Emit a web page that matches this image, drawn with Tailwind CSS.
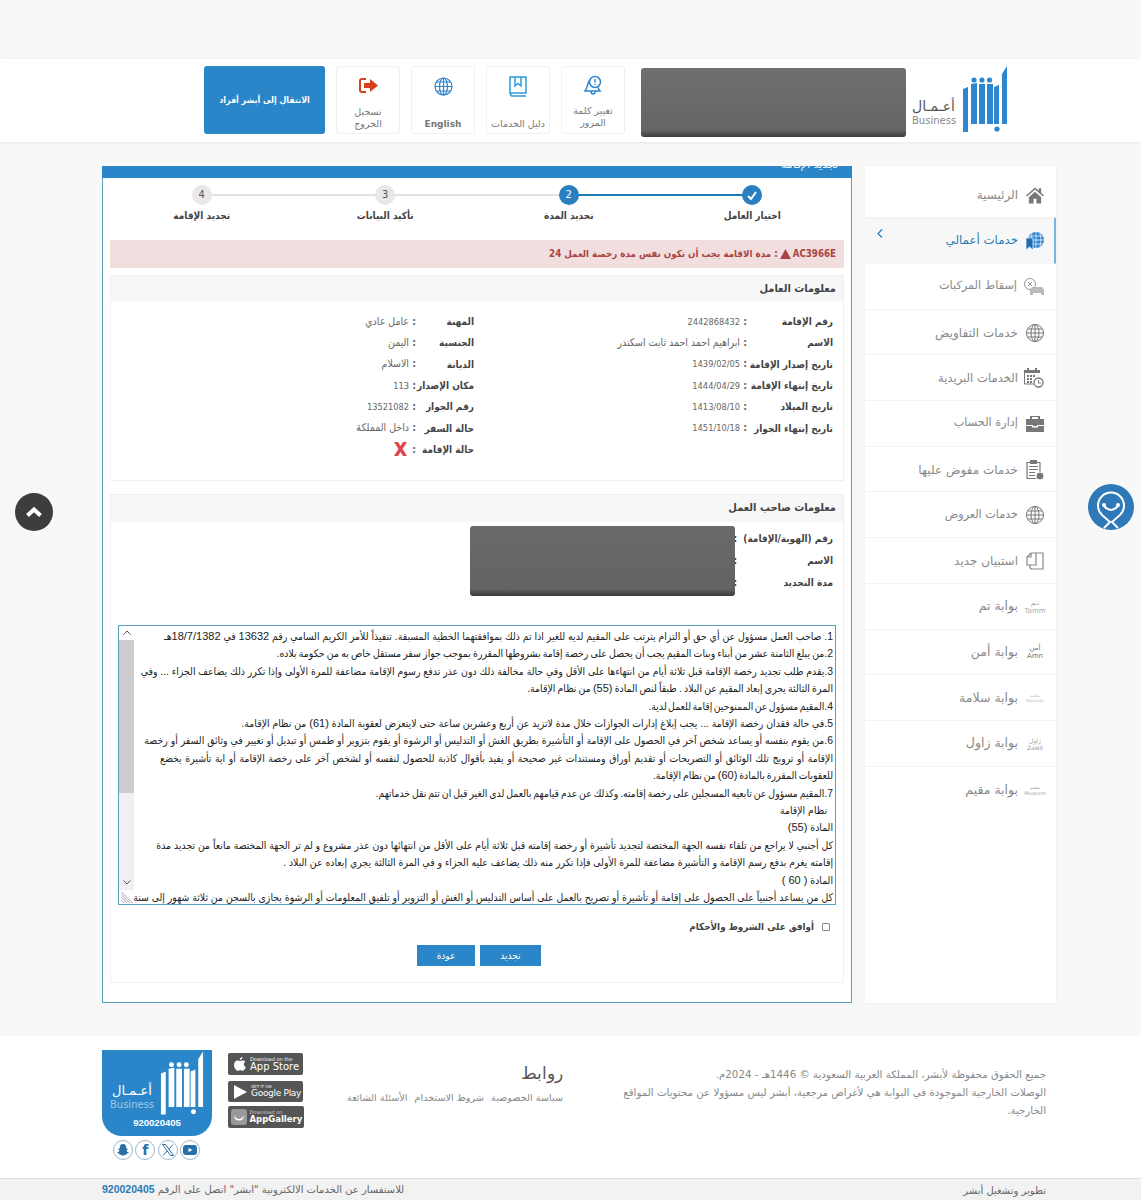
<!DOCTYPE html>
<html lang="ar" dir="rtl">
<head>
<meta charset="UTF-8">
<meta name="viewport" content="width=device-width, initial-scale=1.0">
<title>أبشر أعمال</title>
<script src="https://cdn.jsdelivr.net/npm/@tailwindcss/browser@4"></script>
</head>
<body class="relative h-[1200px] overflow-hidden bg-[#f8f8f8] font-['DejaVu_Sans',sans-serif] text-[#666]">

<!-- top bar -->
<header class="mt-[59px] flex h-[83px] items-start bg-white pr-[133px] shadow-[0_1px_3px_rgba(0,0,0,0.08)]">
  <div class="mt-[7px] flex h-[66px] w-[96px] items-end justify-between">
    <svg class="h-[66px] w-[46px] fill-[#2e86d0]" viewBox="0 0 46 66">
      <path d="M1 23l5-2v45H1zM9 18l6-1v41H9zM17 18h6v40h-6zM25 18h6v40h-6zM32 21l5-2v39h-5zM40 58V8l5-8v58z"/>
      <circle cx="12" cy="14" r="2.600"/><circle cx="20" cy="14" r="2.600"/><circle cx="27.500" cy="14" r="2.600"/><circle cx="35" cy="63" r="2.600"/>
    </svg>
    <div class="mb-[6px] flex flex-col items-end leading-none">
      <span class="text-[14px] text-[#555]">أعـمـال</span>
      <span dir="ltr" class="mt-[3px] text-[10px] text-[#888]">Business</span>
    </div>
  </div>
  <div class="mr-[6px] mt-[9px] h-[69px] w-[265px] rounded-[3px] bg-linear-to-b from-[#6e6f6f] via-[#646565] via-[90%] to-[#3d3d3d]"></div>
  <div class="mr-[16px] mt-[7px] flex gap-[11px]">
    <a class="flex h-[68px] w-[64px] flex-col items-center rounded-[3px] border border-[#f0f0f0] pt-[8px] text-center text-[9.500px] leading-[12px] text-[#777]">
      <svg class="h-[22px] w-[22px] fill-none stroke-[#2e86d0] stroke-[1.500]" viewBox="0 0 22 22"><circle cx="13" cy="7" r="5.500"/><path d="M13 4v3.500M13 9v1M7 6c-1.500 2-1 6-4 10h15c-1-1-1.500-2-2-3.500M9 16c0 4 4 4 4.500 0"/></svg>
      <span class="mt-[8px]">تغيير كلمة المرور</span>
    </a>
    <a class="flex h-[68px] w-[64px] flex-col items-center rounded-[3px] border border-[#f0f0f0] pt-[9px] text-center text-[9.500px] leading-[12px] text-[#777]">
      <svg class="h-[21px] w-[20px] fill-none stroke-[#2e9bd6] stroke-[1.500]" viewBox="0 0 20 21"><path d="M2 18V1h16v16H4c-2 0-2 3 0 3h14M7 1v9l3-2.500L13 10V1"/></svg>
      <span class="mt-[21px] whitespace-nowrap">دليل الخدمات</span>
    </a>
    <a class="flex h-[68px] w-[64px] flex-col items-center rounded-[3px] border border-[#f0f0f0] pt-[10px] text-center text-[9px] font-bold leading-[12px] text-[#777]">
      <svg class="h-[19px] w-[19px] fill-none stroke-[#2e86d0] stroke-[1.200]" viewBox="0 0 19 19"><circle cx="9.500" cy="9.500" r="8.500"/><ellipse cx="9.500" cy="9.500" rx="4" ry="8.500"/><path d="M9.500 1v17M1 9.500h17M2 5h15M2 14h15"/></svg>
      <span class="mt-[22px]">English</span>
    </a>
    <a class="flex h-[68px] w-[64px] flex-col items-center rounded-[3px] border border-[#f0f0f0] pt-[11px] text-center text-[9.500px] leading-[12px] text-[#777]">
      <svg class="h-[15px] w-[19px]" viewBox="0 0 19 15"><path class="fill-none stroke-[#d6401a] stroke-2" d="M7 1H3Q1 1 1 3v9q0 2 2 2h4"/><path class="fill-[#d6401a]" d="M5 5h6V1l8 6.500-8 6.500v-4H5z"/></svg>
      <span class="mt-[13px] w-[40px]">تسجيل الخروج</span>
    </a>
    <a class="flex h-[68px] w-[121px] items-center justify-center rounded-[3px] bg-[#2a86c8] pt-[1px] font-['DejaVu_Sans_Condensed',sans-serif] text-[8.800px] font-bold text-white">الانتقال إلى أبشر أفراد</a>
  </div>
</header>

<main class="mt-[24px] flex h-[837px] gap-[13px] pl-[102px] pr-[85px]">
  <!-- side menu -->
  <nav class="h-full w-[191px] bg-white text-[12px] text-[#888] shadow-[0_0_2px_rgba(0,0,0,0.06)]">
    <a class="flex h-[52px] items-center border-b border-[#f3f3f3] pr-[12px] pt-[6px]">
      <svg class="h-[18px] w-[18px] fill-[#777]" viewBox="0 0 19 18"><path d="M9.500 1L0 9.500l1 1.200L9.500 3.200 18 10.700l1-1.200-3-2.700V2h-2.500v2.500zM3 11.500V18h5v-5h3v5h5v-6.500L9.500 5.500z"/></svg>
      <span class="mr-[8px]">الرئيسية</span>
    </a>
    <a class="relative flex h-[46px] items-center border-b border-r-2 border-b-[#f3f3f3] border-r-[#7ab5e0] bg-[#f7f7f7] pr-[10px] pt-[1px] text-[#2a7cb5]">
      <svg class="h-[18px] w-[18px]" viewBox="0 0 18 18"><circle class="fill-[#2e86d0]" cx="10" cy="8" r="8"/><path class="fill-none stroke-white stroke-[0.700]" d="M2 8h16M10 0v16M6 1q-2 7 0 14M14 1q2 7 0 14M3 4h14M3 12h14"/><path class="fill-[#1f6fb0] stroke-white stroke-[0.700]" d="M0 6h7v12l-3.500-3L0 18z"/></svg>
      <span class="mr-[8px] text-[11.800px] font-medium">خدمات أعمالي</span>
      <svg class="absolute left-[12px] top-[11px] h-[9px] w-[6px] fill-none stroke-[#2a7cb5] stroke-[1.200]" viewBox="0 0 6 9"><path d="M5 .5L1 4.500 5 8.500"/></svg>
    </a>
    <a class="flex h-[45.700px] items-center border-b border-[#f3f3f3] pr-[11px] pt-[1px]">
      <svg class="h-[18px] w-[22px] fill-none stroke-[#999]" viewBox="0 0 22 18"><circle cx="7" cy="6" r="5.500"/><path d="M5 4l4 4M9 4L5 8"/><path class="fill-[#bbb] stroke-none" d="M9 9h10l2 3v5h-3v-2H10v2H7v-5z"/></svg>
      <span class="mr-[6px] text-[11.300px]">إسقاط المركبات</span>
    </a>
    <a class="flex h-[45.700px] items-center border-b border-[#f3f3f3] pr-[12px] pt-[1px]">
      <svg class="h-[18px] w-[18px] fill-none stroke-[#777]" viewBox="0 0 18 18"><circle cx="9" cy="9" r="8.500"/><ellipse cx="9" cy="9" rx="4" ry="8.500"/><path d="M9 .5v17M.5 9h17M2 5h14M2 13h14"/></svg>
      <span class="mr-[8px]">خدمات التفاويض</span>
    </a>
    <a class="flex h-[45.700px] items-center border-b border-[#f3f3f3] pr-[12px] pt-[1px]">
      <svg class="h-[20px] w-[20px]" viewBox="0 0 20 20"><path class="fill-[#777]" d="M0 2h16v3H0zM3 0h2v3H3zM11 0h2v3h-2z"/><path class="fill-none stroke-[#777]" d="M.5 5v11h9"/><path class="fill-[#777]" d="M3 7h2v2H3zM6 7h2v2H6zM9 7h2v2H9zM3 10h2v2H3zM6 10h2v2H6zM3 13h2v2H3zM6 13h2v2H6z"/><circle class="fill-white stroke-[#777] stroke-[1.300]" cx="14.500" cy="14.500" r="4.500"/><path class="fill-none stroke-[#777]" d="M14.500 12v3h2.500"/></svg>
      <span class="mr-[6px] text-[11.600px]">الخدمات البريدية</span>
    </a>
    <a class="flex h-[45.700px] items-center border-b border-[#f3f3f3] pr-[12px] pt-[1px]">
      <svg class="h-[16px] w-[18px] fill-[#777]" viewBox="0 0 18 16"><path d="M6 3V1h6v2h2V0H4v3zM0 3h18v6h-7v1H7V9H0zM0 10h6v1.500h6V10h6v6H0z"/></svg>
      <span class="mr-[8px] text-[11.300px]">إدارة الحساب</span>
    </a>
    <a class="flex h-[45.700px] items-center border-b border-[#f3f3f3] pr-[12px] pt-[1px]">
      <svg class="h-[20px] w-[18px]" viewBox="0 0 18 20"><path class="fill-none stroke-[#777] stroke-[1.200]" d="M1 2.500h13v16H1z"/><path class="fill-[#777]" d="M4 0h7v4H4zM3 6h9v1H3zM3 9h9v1H3zM3 12h6v1H3zM3 15h6v1H3z"/><circle class="fill-[#777] stroke-white" cx="14" cy="16" r="4"/></svg>
      <span class="mr-[8px]">خدمات مفوض عليها</span>
    </a>
    <a class="flex h-[45.700px] items-center border-b border-[#f3f3f3] pr-[12px] pt-[1px]">
      <svg class="h-[18px] w-[18px] fill-none stroke-[#777]" viewBox="0 0 18 18"><circle cx="9" cy="9" r="8.500"/><ellipse cx="9" cy="9" rx="4" ry="8.500"/><path d="M9 .5v17M.5 9h17M2 5h14M2 13h14"/></svg>
      <span class="mr-[8px] text-[11.200px]">خدمات العروض</span>
    </a>
    <a class="flex h-[45.700px] items-center border-b border-[#f3f3f3] pr-[12px] pt-[1px]">
      <svg class="h-[18px] w-[18px] fill-none stroke-[#888] stroke-[1.200]" viewBox="0 0 18 18"><path d="M6 1h11v16H6q-2 0-2-2v-2M1 13V5l4-4h5v12H1zM1 5h4V1"/></svg>
      <span class="mr-[8px]">استبيان جديد</span>
    </a>
    <a class="flex h-[45.700px] items-center border-b border-[#f3f3f3] pr-[11px] pt-[1px]">
      <span class="flex w-[20px] flex-col items-center text-[7px] leading-[8px] text-[#aaa]"><span>تـم</span><span dir="ltr">Tamm</span></span>
      <span class="mr-[7px] text-[12.500px]">بوابة تم</span>
    </a>
    <a class="flex h-[45.700px] items-center border-b border-[#f3f3f3] pr-[11px] pt-[1px]">
      <span class="flex w-[20px] flex-col items-center text-[7px] leading-[8px] text-[#777]"><span>أمن</span><span dir="ltr">Amn</span></span>
      <span class="mr-[7px] text-[12.500px]">بوابة أمن</span>
    </a>
    <a class="flex h-[45.700px] items-center border-b border-[#f3f3f3] pr-[11px] pt-[1px]">
      <span class="flex w-[20px] flex-col items-center text-[4px] leading-[5px] text-[#bbb]"><span>سلامة</span><span dir="ltr">Salamah</span></span>
      <span class="mr-[7px] text-[12.500px]">بوابة سلامة</span>
    </a>
    <a class="flex h-[45.700px] items-center border-b border-[#f3f3f3] pr-[11px] pt-[1px]">
      <span class="flex w-[20px] flex-col items-center text-[6px] leading-[7px] text-[#999]"><span>زاول</span><span dir="ltr">Zawil</span></span>
      <span class="mr-[7px] text-[12.500px]">بوابة زاول</span>
    </a>
    <a class="flex h-[45.700px] items-center pr-[11px] pt-[1px]">
      <span class="flex w-[20px] flex-col items-center text-[5px] leading-[6px] text-[#aaa]"><span>مقيم</span><span dir="ltr">Muqeem</span></span>
      <span class="mr-[7px] text-[12.500px]">بوابة مقيم</span>
    </a>
  </nav>

  <!-- wizard panel -->
  <section class="h-full w-[750px] border border-t-0 border-[#5a9fc0] bg-white font-['DejaVu_Sans_Condensed',sans-serif]">
    <div class="-mx-px h-[12px] overflow-hidden bg-[#2a86c8] pr-[14px] text-[12px] text-white"><div class="-mt-[5px] leading-[6px]">تجديد الإقامة</div></div>

    <!-- steps -->
    <div class="mx-[7px] grid grid-cols-4 pt-[7px] text-[10px] font-bold text-[#444]">
      <div class="relative flex flex-col items-center">
        <span class="absolute right-1/2 top-[9px] h-[2px] w-full bg-[#1f7ab8]"></span>
        <span class="relative flex h-[20px] w-[20px] items-center justify-center rounded-full bg-[#2a7fc0]"><svg class="h-[9px] w-[10px] fill-none stroke-white stroke-2" viewBox="0 0 10 9"><path d="M1 5l3 3 5-7"/></svg></span>
        <span class="mt-[3px]">اختيار العامل</span>
      </div>
      <div class="relative flex flex-col items-center">
        <span class="absolute right-1/2 top-[9px] h-[2px] w-full bg-[#e2e2e2]"></span>
        <span class="relative flex h-[20px] w-[20px] items-center justify-center rounded-full bg-[#2a7fc0] text-[11px] font-normal text-white">2</span>
        <span class="mt-[3px]">تحديد المدة</span>
      </div>
      <div class="relative flex flex-col items-center">
        <span class="absolute right-1/2 top-[9px] h-[2px] w-full bg-[#e2e2e2]"></span>
        <span class="relative flex h-[20px] w-[20px] items-center justify-center rounded-full bg-[#e8e8e8] text-[11px] font-normal text-[#555]">3</span>
        <span class="mt-[3px]">تأكيد البيانات</span>
      </div>
      <div class="relative flex flex-col items-center">
        <span class="relative flex h-[20px] w-[20px] items-center justify-center rounded-full bg-[#e8e8e8] text-[11px] font-normal text-[#555]">4</span>
        <span class="mt-[3px]">تجديد الإقامة</span>
      </div>
    </div>

    <div class="mx-[7px] mt-[17px] flex h-[28px] items-center gap-[2px] bg-[#f2dede] pr-[8px] text-[9.700px] font-bold text-[#a94442]">
      <span dir="ltr">AC3966E</span>
      <svg class="h-[10px] w-[11px] fill-[#a94442]" viewBox="0 0 11 10"><path d="M5.500 0L11 10H0z"/></svg>
      <span>: مدة الاقامة يجب أن تكون نفس مدة رخصة العمل 24</span>
    </div>

    <!-- worker info -->
    <div class="mx-[7px] mt-[7px] h-[206px] border border-[#f0f0f0]">
      <h3 class="flex h-[26px] items-center bg-[#f7f7f7] pr-[7px] text-[11px] font-bold text-[#444]">معلومات العامل</h3>
      <div class="grid grid-cols-[359px_1fr] pr-[10px] pt-[9px] text-[10.500px] text-[#666]">
        <div>
          <div class="flex h-[21.300px] items-center"><b class="w-[86px] text-[10px] text-[#444]">رقم الإقامة</b><span class="w-[7px] font-bold">:</span><span class="text-[9.200px]">2442868432</span></div>
          <div class="flex h-[21.300px] items-center"><b class="w-[86px] text-[10px] text-[#444]">الاسم</b><span class="w-[7px] font-bold">:</span><span>ابراهيم احمد احمد ثابت اسكندر</span></div>
          <div class="flex h-[21.300px] items-center"><b class="w-[86px] text-[10px] text-[#444]">تاريخ إصدار الإقامة</b><span class="w-[7px] font-bold">:</span><span class="text-[9.200px]">1439/02/05</span></div>
          <div class="flex h-[21.300px] items-center"><b class="w-[86px] whitespace-nowrap text-[10px] text-[#444]">تاريخ إنتهاء الإقامة</b><span class="w-[7px] font-bold">:</span><span class="text-[9.200px]">1444/04/29</span></div>
          <div class="flex h-[21.300px] items-center"><b class="w-[86px] text-[10px] text-[#444]">تاريخ الميلاد</b><span class="w-[7px] font-bold">:</span><span class="text-[9.200px]">1413/08/10</span></div>
          <div class="flex h-[21.300px] items-center"><b class="w-[86px] text-[10px] text-[#444]">تاريخ إنتهاء الجواز</b><span class="w-[7px] font-bold">:</span><span class="text-[9.200px]">1451/10/18</span></div>
        </div>
        <div>
          <div class="flex h-[21.300px] items-center"><b class="w-[58px] text-[10px] text-[#444]">المهنة</b><span class="w-[7px] font-bold">:</span><span>عامل عادي</span></div>
          <div class="flex h-[21.300px] items-center"><b class="w-[58px] text-[10px] text-[#444]">الجنسية</b><span class="w-[7px] font-bold">:</span><span>اليمن</span></div>
          <div class="flex h-[21.300px] items-center"><b class="w-[58px] text-[10px] text-[#444]">الديانة</b><span class="w-[7px] font-bold">:</span><span>الاسلام</span></div>
          <div class="flex h-[21.300px] items-center"><b class="w-[58px] whitespace-nowrap text-[10px] text-[#444]">مكان الإصدار</b><span class="w-[7px] font-bold">:</span><span class="text-[9.200px]">113</span></div>
          <div class="flex h-[21.300px] items-center"><b class="w-[58px] text-[10px] text-[#444]">رقم الجواز</b><span class="w-[7px] font-bold">:</span><span class="text-[9.200px]">13521082</span></div>
          <div class="flex h-[21.300px] items-center"><b class="w-[58px] text-[10px] text-[#444]">حالة السفر</b><span class="w-[7px] font-bold">:</span><span>داخل المملكة</span></div>
          <div class="flex h-[21.300px] items-center"><b class="w-[58px] text-[10px] text-[#444]">حالة الإقامة</b><span class="w-[7px] font-bold">:</span>
            <svg class="mr-[2px] h-[14px] w-[13px] fill-[#e2444a]" viewBox="0 0 13 14"><path d="M0 0h4l2.500 4L9 0h4L8.500 7 13 14H9L6.500 10 4 14H0l4.500-7z"/></svg>
          </div>
        </div>
      </div>
    </div>

    <!-- employer info -->
    <div class="relative mx-[7px] mt-[13px] h-[489px] border border-[#f0f0f0]">
      <h3 class="flex h-[27px] items-center bg-[#f7f7f7] pr-[7px] text-[11px] font-bold text-[#444]">معلومات صاحب العمل</h3>
      <div class="pr-[10px] pt-[5px] text-[10px] font-bold text-[#444]">
        <div class="flex h-[22.300px] items-center"><span class="w-[96px] whitespace-nowrap">رقم (الهوية/الإقامة)</span><span>:</span></div>
        <div class="flex h-[22.300px] items-center"><span class="w-[96px]">الاسم</span><span>:</span></div>
        <div class="flex h-[22.300px] items-center"><span class="w-[96px]">مدة التجديد</span><span>:</span></div>
      </div>
      <div class="absolute right-[108px] top-[31px] h-[70px] w-[265px] rounded-[3px] bg-linear-to-b from-[#6a6a6a] via-[#636363] via-[90%] to-[#3a3a3a]"></div>

      <div class="mx-[7px] mt-[31px] flex h-[280px] overflow-hidden border border-[#5a9fc0] font-['Liberation_Sans','DejaVu_Sans_Condensed',sans-serif] text-[10.400px] leading-[17.400px] text-[#222]">
        <div class="min-w-0 flex-1 whitespace-nowrap pr-[2px] pt-[2px]">
          <div>1. صاحب العمل مسؤول عن أي حق أو التزام يترتب على المقيم لديه للغير اذا تم ذلك بموافقتهما الخطية المسبقة. تنفيذاً للأمر الكريم السامي رقم <span class="text-[11px]">13632</span> في <span class="text-[11px]">18/7/1382</span>هـ</div>
          <div class="[word-spacing:-0.700px]">2.من يبلغ الثامنة عشر من أبناء وبنات المقيم يجب أن يحصل على رخصة إقامة بشروطها المقررة بموجب جواز سفر مستقل خاص به من حكومة بلاده.</div>
          <div>3.يقدم طلب تجديد رخصة الإقامة قبل ثلاثة أيام من انتهاءها على الأقل وفي حالة مخالفة ذلك دون عذر تدفع رسوم الإقامة مضاعفة للمرة الأولى وإذا تكرر ذلك يضاعف الجزاء ... وفي</div>
          <div class="[word-spacing:-0.700px]">المرة الثالثة يجرى إبعاد المقيم عن البلاد . طبقاً لنص المادة <span class="text-[11px]">(55)</span> من نظام الإقامة.</div>
          <div class="[word-spacing:-1.500px]">4.المقيم مسؤول عن الممنوحين إقامة للعمل لدية.</div>
          <div>5.في حالة فقدان رخصة الإقامة ... يجب إبلاغ إدارات الجوازات خلال مدة لاتزيد عن أربع وعشرين ساعة حتى لايتعرض لعقوبة المادة <span class="text-[11px]">(61)</span> من نظام الإقامة.</div>
          <div>6.من يقوم بنفسه أو يساعد شخص آخر في الحصول على الإقامة أو التأشيرة بطريق الغش أو التدليس أو الرشوة أو يقوم بتزوير أو طمس أو تبديل أو تغيير في وثائق السفر أو رخصة</div>
          <div class="[word-spacing:0.700px]">الإقامة أو ترويج تلك الوثائق أو التصريحات أو تقديم أوراق ومستندات غير صحيحة أو يفيد بأقوال كاذبة للحصول لنفسه أو لشخص آخر على رخصة الإقامة أو اية تأشيرة يخضع</div>
          <div class="[word-spacing:-1px]">للعقوبات المقررة بالمادة <span class="text-[11px]">(60)</span> من نظام الإقامة.</div>
          <div class="[word-spacing:-1px]">7.المقيم مسؤول عن تابعيه المسجلين على رخصة إقامته. وكذلك عن عدم قيامهم بالعمل لدى الغير قبل ان تتم نقل خدماتهم.</div>
          <div class="pr-[6px]">نظام الإقامة</div>
          <div>المادة <span class="text-[11px]">(55)</span></div>
          <div>كل أجنبي لا يراجع من تلقاء نفسه الجهة المختصة لتجديد تأشيرة أو رخصة إقامته قبل ثلاثة أيام على الأقل من انتهائها دون عذر مشروع و لم تر الجهة المختصة مانعاً من تجديد مدة</div>
          <div>إقامته يغرم بدفع رسم الإقامة و التأشيرة مضاعفة للمرة الأولى فإذا تكرر منه ذلك يضاعف عليه الجزاء و في المرة الثالثة يجري إبعاده عن البلاد .</div>
          <div>المادة <span class="text-[11px]">( 60 )</span></div>
          <div>كل من يساعد أجنبياً على الحصول على إقامة أو تأشيرة أو تصريح بالعمل على أساس التدليس أو الغش أو التزوير أو تلفيق المعلومات أو الرشوة يجازى بالسجن من ثلاثة شهور إلى سنة</div>
        </div>
        <!-- scrollbar -->
        <div class="flex w-[15px] shrink-0 flex-col items-center bg-white">
          <div class="flex h-[14px] w-full items-center justify-center"><svg class="h-[5px] w-[8px] fill-none stroke-[#555]" viewBox="0 0 8 5"><path d="M.5 4.500L4 1l3.500 3.500"/></svg></div>
          <div class="h-[153px] w-full bg-[#cdcdcd]"></div>
          <div class="h-[83px] w-full bg-[#f0f0f0]"></div>
          <div class="flex h-[14px] w-full items-center justify-center bg-[#f0f0f0]"><svg class="h-[5px] w-[8px] fill-none stroke-[#555]" viewBox="0 0 8 5"><path d="M.5.5L4 4l3.500-3.500"/></svg></div>
          <svg class="mt-[1px] h-[13px] w-[14px] fill-none stroke-[#999]" viewBox="0 0 14 14"><path d="M1 1l12 12M1 4l9 9M1 7l6 6M1 10l3 3"/></svg>
        </div>
      </div>

      <label class="mt-[15px] flex items-center gap-[8px] pr-[13px] text-[9.800px] font-bold text-[#444]">
        <span class="h-[8px] w-[8px] rounded-[1px] border border-[#888] bg-white"></span>
        <span>أوافق على الشروط والأحكام</span>
      </label>
      <div class="mt-[10px] flex justify-center gap-[5px] pl-[4px] text-[10px] text-white">
        <button class="h-[21px] w-[61px] bg-[#2a86c8]">تجديد</button>
        <button class="h-[21px] w-[58px] bg-[#2a86c8]">عودة</button>
      </div>
    </div>
  </section>
</main>

<!-- footer -->
<footer class="mt-[33px] flex h-[142px] bg-white pl-[102px] pr-[95px] text-[#888]">
  <div class="w-[432px] pt-[29px] text-[10.250px] leading-[18px]">
    <p>جميع الحقوق محفوظة لأبشر، المملكة العربية السعودية © 1446هـ - 2024م.</p>
    <p>الوصلات الخارجية الموجودة في البوابة هي لأغراض مرجعية، أبشر ليس مسؤولا عن محتويات المواقع الخارجية.</p>
  </div>
  <div class="mr-[53px] w-[215px] pt-[23px]">
    <h4 class="text-[17px] font-light leading-[28px] text-[#555]">روابط</h4>
    <div class="mt-[4px] flex gap-[7px] whitespace-nowrap text-[9.700px]"><a>سياسة الخصوصية</a><a>شروط الاستخدام</a><a>الأسئلة الشائعة</a></div>
  </div>
  <div class="mr-[45px] flex w-[75px] flex-col items-center pt-[17px]" dir="ltr">
    <div class="flex h-[22px] w-[75px] items-center gap-[4px] rounded-[2px] bg-[#555] pl-[6px] text-white">
      <svg class="h-[14px] w-[12px] fill-white" viewBox="0 0 12 14"><path d="M8.500 0c.1 1.500-1.200 3-2.700 2.900C5.700 1.500 7 .1 8.500 0zM6 4c.8 0 1.500-.6 2.700-.6 1 0 2 .5 2.600 1.400-2.200 1.300-1.800 4.400.5 5.300-.6 1.500-1.700 3.700-3 3.700-1 0-1.300-.6-2.500-.6s-1.600.6-2.500.6C2 13.800 0 10.500 0 8c0-2.700 1.700-4.500 3.500-4.500C4.500 3.500 5.300 4 6 4z"/></svg>
      <span class="flex flex-col leading-none"><span class="text-[5px]">Download on the</span><span class="text-[10px]">App Store</span></span>
    </div>
    <div class="mt-[6px] flex h-[21px] w-[75px] items-center gap-[4px] rounded-[2px] bg-[#555] pl-[6px] text-white">
      <svg class="h-[14px] w-[13px] fill-white" viewBox="0 0 13 14"><path d="M0 0l13 7L0 14z"/></svg>
      <span class="flex flex-col leading-none"><span class="text-[4px]">GET IT ON</span><span class="text-[9px] tracking-[-0.3px]">Google Play</span></span>
    </div>
    <div class="mt-[4px] flex h-[22px] w-[76px] items-center gap-[3px] rounded-[2px] bg-[#555] pl-[3px] text-white">
      <svg class="h-[16px] w-[16px]" viewBox="0 0 16 16"><rect class="fill-[#999]" width="16" height="16" rx="3"/><path class="fill-white" d="M3 6q2 4 5 4t5-4l-1 4q-4 3-8 0z"/></svg>
      <span class="flex flex-col leading-none"><span class="text-[5px] text-[#ccc]">Download on</span><span class="text-[8.500px] font-bold">AppGallery</span></span>
    </div>
  </div>
  <div class="mr-[16px] w-[110px] pt-[14px]">
    <div class="flex h-[86px] w-[110px] flex-col items-center rounded-b-[20px] bg-[#2a86c8] pt-[1px]">
      <div class="flex h-[64px] w-[100px] items-end justify-center gap-[6px]">
        <svg class="h-[64px] w-[44px] fill-white" viewBox="0 0 46 66">
          <path d="M1 23l5-2v45H1zM9 18l6-1v41H9zM17 18h6v40h-6zM25 18h6v40h-6zM32 21l5-2v39h-5zM40 58V8l5-8v58z"/>
          <circle cx="12" cy="14" r="2.600"/><circle cx="20" cy="14" r="2.600"/><circle cx="27.500" cy="14" r="2.600"/><circle cx="35" cy="63" r="2.600"/>
        </svg>
        <div class="mb-[5px] flex flex-col items-center leading-none">
          <span class="text-[13px] text-white">أعـمـال</span>
          <span dir="ltr" class="mt-[3px] text-[10px] text-[#9cc8ea]">Business</span>
        </div>
      </div>
      <span class="mt-[1px] font-['Liberation_Sans',sans-serif] text-[9.500px] font-bold text-white">920020405</span>
    </div>
    <div class="mt-[4px] flex justify-center gap-[2.500px] pr-[1px]" dir="ltr">
      <span class="flex h-[20px] w-[20px] items-center justify-center rounded-full border border-[#9db9cc]"><svg class="h-[12px] w-[12px] fill-[#2a6fa8]" viewBox="0 0 12 12"><path d="M6 0c2.500 0 3.500 2 3.300 4.500l1.700.6c-.3.8-1.300.9-1.500 1.500.2.800 1.200 1.700 2.500 2-.3.700-1.400.8-2 1l-.3 1c-1.800-.3-2.200 1-3.700 1S4 10.300 2.300 10.600l-.3-1c-.6-.2-1.700-.3-2-1 1.300-.3 2.300-1.200 2.500-2C2.300 6 1.300 5.900 1 5.100l1.700-.6C2.500 2 3.500 0 6 0z"/></svg></span>
      <span class="flex h-[20px] w-[20px] items-center justify-center rounded-full border border-[#9db9cc] text-[14px] font-bold text-[#2a6fa8]">f</span>
      <span class="flex h-[20px] w-[20px] items-center justify-center rounded-full border border-[#9db9cc]"><svg class="h-[12px] w-[12px] fill-none stroke-[#2a6fa8]" viewBox="0 0 12 12"><path d="M.5.5h3l8 11h-3zM11 .5L7 5M5 7L1 11.500"/></svg></span>
      <span class="flex h-[20px] w-[20px] items-center justify-center rounded-full border border-[#9db9cc]"><svg class="h-[10px] w-[14px]" viewBox="0 0 14 10"><rect class="fill-[#2a6fa8]" width="14" height="10" rx="3"/><path class="fill-white" d="M5.500 3l4 2-4 2z"/></svg></span>
    </div>
  </div>
</footer>
<div class="flex h-[23px] items-center justify-between border-t border-[#ddd] bg-[#f2f2f2] pl-[102px] pr-[95px] text-[10px] text-[#666]">
  <span>تطوير وتشغيل أبشر</span>
  <span>للاستفسار عن الخدمات الالكترونية "ابشر" اتصل على الرقم <b class="font-['Liberation_Sans',sans-serif] text-[10.500px] text-[#2a7cb5]">920020405</b></span>
</div>

<!-- floating buttons -->
<button class="absolute left-[15px] top-[493px] flex h-[38px] w-[38px] items-center justify-center rounded-full bg-[#3d3d3d]">
  <svg class="h-[10px] w-[16px] fill-none stroke-white stroke-[4]" viewBox="0 0 16 10"><path d="M1.500 8.500L8 2.500l6.500 6"/></svg>
</button>
<button class="absolute left-[1088px] top-[484px] h-[46px] w-[46px]">
  <svg class="h-[46px] w-[46px]" viewBox="0 0 46 46"><circle class="fill-[#2f79b9]" cx="23" cy="23" r="23"/><path class="fill-none stroke-white stroke-2" d="M14 31A13 13 0 1 1 32 31M14 31l8 7-6 6M32 31l-8 7 6 6M16 22q7 8 14 0"/><circle class="fill-white" cx="16" cy="21" r="2"/><circle class="fill-white" cx="30" cy="21" r="2"/></svg>
</button>
</body>
</html>
